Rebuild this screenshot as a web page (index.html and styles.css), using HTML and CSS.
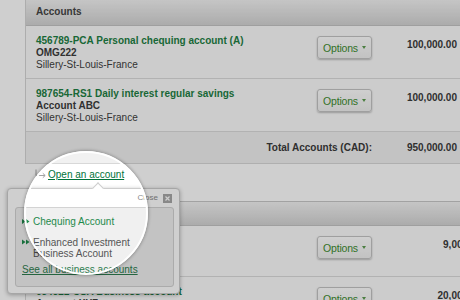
FILE: index.html
```html
<!DOCTYPE html>
<html lang="en">
  <head>
    <meta charset="utf-8" />
    <title>Accounts</title>
    <link rel="stylesheet" href="styles.css">
  </head>
  <body>
    <div class="page">
      <div class="accounts">
        <div class="accounts-head">Accounts</div>
        <div class="account">
          <div class="account-info">
            <a class="account-name" href="#">456789-PCA Personal chequing account (A)</a>
            <div class="account-owner">OMG222</div>
            <div>Sillery-St-Louis-France</div>
          </div>
          <button class="options">Options <span class="caret"></span></button>
          <div class="amount">100,000.00</div>
        </div>
        <div class="account">
          <div class="account-info">
            <a class="account-name" href="#">987654-RS1 Daily interest regular savings</a>
            <div class="account-owner">Account ABC</div>
            <div>Sillery-St-Louis-France</div>
          </div>
          <button class="options">Options <span class="caret"></span></button>
          <div class="amount">100,000.00</div>
        </div>
        <div class="accounts-total">
          <div class="total-label">Total Accounts (CAD):</div>
          <div class="amount">950,000.00</div>
        </div>
      </div>

      <div class="open-account">
        <svg class="open-icon" width="12" height="12" viewBox="0 0 12 12">
          <path d="M1 0.5V6.5H10M7.8 4.3L10.2 6.5L7.8 8.7" fill="none" stroke="#a3a3a3" stroke-width="1"/>
        </svg>
        <a href="#">Open an account</a>
      </div>

      <div class="accounts accounts-wide">
        <div class="accounts-head">Business accounts</div>
        <div class="account">
          <div class="account-info">
            <a class="account-name" href="#">112233-BCA Operating</a>
            <div class="account-owner">Account XYZ</div>
            <div>Sillery-St-Louis-France</div>
          </div>
          <button class="options">Options <span class="caret"></span></button>
          <div class="amount">9,000.00</div>
        </div>
        <div class="account">
          <div class="account-info">
            <a class="account-name" href="#">654321-CSA Business account</a>
            <div class="account-owner">Account XYZ</div>
            <div>Sillery-St-Louis-France</div>
          </div>
          <button class="options">Options <span class="caret"></span></button>
          <div class="amount">20,000.00</div>
        </div>
      </div>
    </div>

    <div class="popup">
      <div class="popup-close">
        Close
        <svg width="9" height="9" viewBox="0 0 9 9">
          <rect width="9" height="9" fill="#a8a8a8"/>
          <path d="M2.5 2.5L6.5 6.5M6.5 2.5L2.5 6.5" stroke="#fff" stroke-width="1.2"/>
        </svg>
      </div>
      <div class="popup-box">
        <a class="popup-item popup-link" href="#">
          <svg class="bullet" width="11" height="12" viewBox="0 0 11 12">
            <path d="M0 3L3.5 5.5L0 8ZM4 3L7.5 5.5L4 8Z" fill="#1e8a4c"/>
          </svg>
          <span>Chequing Account</span>
        </a>
        <div class="popup-item popup-text">
          <svg class="bullet" width="11" height="11" viewBox="0 0 11 11">
            <path d="M0 2.5L3.5 5L0 7.5ZM4 2.5L7.5 5L4 7.5Z" fill="#1e8a4c"/>
          </svg>
          <span>Enhanced Investment<br>Business Account</span>
        </div>
        <a class="popup-all" href="#">See all business accounts</a>
      </div>
    </div>

    <div class="spotlight"></div>
  </body>
</html>
```

FILE: styles.css
```css
* {
  margin: 0;
  padding: 0;
  box-sizing: border-box;
}
html,
body {
  overflow: hidden;
}
body {
  width: 460px;
  height: 300px;
  background: #ffffff;
  font-family: "Liberation Sans", Arial, sans-serif;
  font-size: 10px;
  line-height: 12px;
  color: #404040;
}
a {
  color: #1e8044;
  text-decoration: none;
}
.page {
  padding-left: 25px;
}
.accounts {
  width: 435px;
  border-left: 1px solid #d6d6d6;
}
.accounts-wide {
  width: 460px;
  margin-top: 20px;
  border-top: 1px solid #c8c8c8;
}
.accounts-head {
  height: 26px;
  padding: 6px 10px 0;
  background: linear-gradient(#f3f3f3, #d4d4d4);
  border-bottom: 1px solid #c4c4c4;
  font-weight: bold;
  color: #454545;
}
.accounts-wide .accounts-head {
  height: 24px;
  padding-top: 5px;
}
.account {
  display: grid;
  grid-template-columns: 281px 55px 1fr;
  padding: 9px 3px 7px 10px;
  background: #fcfcfc;
  border-bottom: 1px solid #dcdcdc;
}
.accounts-wide .account {
  padding-bottom: 5px;
}
.account-name {
  display: block;
  font-weight: bold;
}
.account-owner {
  font-weight: bold;
  color: #3c3c3c;
}
.options {
  display: flex;
  align-items: center;
  justify-content: center;
  gap: 4px;
  height: 23px;
  margin-top: 1px;
  border: 1px solid #c4c4c4;
  border-radius: 3px;
  background: linear-gradient(#ffffff, #f0f0f0);
  box-shadow: 0 1px 2px rgba(0, 0, 0, 0.25);
  font-family: "Liberation Sans", Arial, sans-serif;
  font-size: 10.5px;
  letter-spacing: -0.2px;
  color: #3d8c30;
}
.caret {
  border-left: 2.5px solid transparent;
  border-right: 2.5px solid transparent;
  border-top: 3px solid #5d9c50;
}
.amount {
  margin-top: 4px;
  text-align: right;
  font-weight: bold;
  color: #3a3a3a;
}
.accounts-total {
  display: grid;
  grid-template-columns: 336px 1fr;
  padding: 10px 3px 9px 10px;
  background: #f1f1f1;
  border-bottom: 1px solid #d8d8d8;
  font-weight: bold;
  color: #3a3a3a;
}
.accounts-total .amount {
  margin-top: 0;
}
.total-label {
  text-align: right;
}
.open-account {
  display: flex;
  margin-top: 5px;
  padding-left: 10px;
}
.open-icon {
  flex: none;
  margin-right: 1px;
}
.open-account a {
  color: #00733a;
  text-decoration: underline;
}

/* popup over the page */
.popup {
  position: absolute;
  left: 7px;
  top: 188px;
  width: 173px;
  padding: 4px 5px 6px 7px;
  background: #ffffff;
  border: 1px solid #cdcdcd;
  border-radius: 4px;
  box-shadow: 0 1px 4px rgba(0, 0, 0, 0.3);
}
.popup:before {
  content: "";
  position: absolute;
  left: 86px;
  top: -5px;
  width: 7px;
  height: 7px;
  background: #ffffff;
  border-top: 1px solid #cdcdcd;
  border-left: 1px solid #cdcdcd;
  transform: rotate(45deg);
}
.popup-close {
  display: flex;
  justify-content: flex-end;
  align-items: center;
  gap: 5px;
  height: 10px;
  padding-right: 2px;
  font-size: 8px;
  line-height: 10px;
  color: #8a8a8a;
}
.popup-box {
  margin-top: 4px;
  padding: 8px 6px 10px;
  background: #f0f0f0;
  border: 1px solid #d3d3d3;
  border-radius: 3px;
}
.popup-item {
  display: flex;
}
.bullet {
  flex: none;
}
.popup-link {
  color: #1e8a4c;
}
.popup-text {
  margin-top: 9px;
  line-height: 11px;
  color: #555555;
}
.popup-all {
  display: block;
  margin-top: 5px;
  color: #2e7d4f;
  text-decoration: underline;
}

/* magnifier spotlight */
.spotlight {
  position: absolute;
  left: 24px;
  top: 151px;
  width: 124px;
  height: 124px;
  border: 2px solid #ffffff;
  border-radius: 50%;
  box-shadow: 0 0 3px 1px rgba(0, 0, 0, 0.25), 0 0 0 700px rgba(0, 0, 0, 0.19);
  pointer-events: none;
}
```
